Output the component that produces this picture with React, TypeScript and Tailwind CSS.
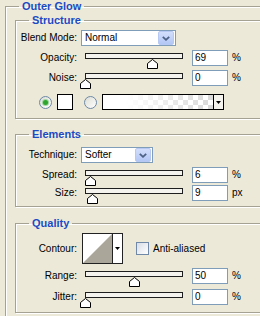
import React from "react";

const Label = ({ children }: { children: React.ReactNode }) => (
  <div className="w-[61px] shrink-0 text-right whitespace-nowrap">{children}</div>
);

const Slider = ({ pct }: { pct: number }) => (
  <div className="relative w-[106px] h-[16px] shrink-0">
    <div className="mt-[5px] mx-[4px] h-[6px] border border-[#1e1e1e] bg-[#f4f3ee]" />
    <svg
      className="absolute top-[6px]"
      style={{ left: 4 + pct * 98 - 5.5 }}
      width="11"
      height="10"
      viewBox="0 0 11 10"
    >
      <polygon points="5.5,0.5 10.5,4.5 10.5,9.5 0.5,9.5 0.5,4.5" fill="#fff" stroke="#000" strokeWidth="1" />
    </svg>
  </div>
);

const NumBox = ({ v }: { v: string }) => (
  <div className="ml-[5px] w-[36px] h-[16px] shrink-0 border border-[#7f9db9] bg-white pl-[2px] leading-[14px]">
    {v}
  </div>
);

const SliderRow = ({ label, pct, v, unit, className }: { label: string; pct: number; v: string; unit: string; className: string }) => (
  <div className={"flex items-center h-[16px] " + className}>
    <Label>{label}</Label>
    <div className="ml-[4px]">
      <Slider pct={pct} />
    </div>
    <NumBox v={v} />
    <span className="ml-[4px]">{unit}</span>
  </div>
);

const Chevron = () => (
  <div className="w-[16px] h-[14px] mr-[1px] rounded-[2px] border border-[#b7c8f2] bg-gradient-to-b from-[#d3defb] to-[#b3c7f5] flex items-center justify-center">
    <svg width="8" height="5" viewBox="0 0 8 5">
      <path d="M0.8 0.8 L4 3.8 L7.2 0.8" fill="none" stroke="#4d6185" strokeWidth="1.8" />
    </svg>
  </div>
);

const Select = ({ value, w }: { value: string; w: string }) => (
  <div className={"ml-[4px] h-[16px] border border-[#7f9db9] bg-white flex items-center justify-between " + w}>
    <span className="pl-[3px] leading-[14px]">{value}</span>
    <Chevron />
  </div>
);

const Radio = ({ checked }: { checked?: boolean }) => (
  <div className="w-[13px] h-[13px] shrink-0 rounded-full border border-[#6d89a6] bg-gradient-to-br from-[#dcdcd6] to-white flex items-center justify-center">
    {checked && <div className="w-[5px] h-[5px] rounded-full bg-[#2ea62e] shadow-[0_0_0_1px_#9ed69e]" />}
  </div>
);

const Legend = ({ children, ml }: { children: React.ReactNode; ml: string }) => (
  <legend className={"px-[3px] font-bold text-[11px] leading-[13px] text-[#1c4ac4] " + ml}>{children}</legend>
);

const group = "border border-[#a5a294] shadow-[inset_1px_1px_0_#fff,1px_1px_0_#fff]";

export default function App() {
  return (
    <div className="w-[260px] h-[316px] overflow-hidden bg-[#ece9d8] text-black text-[10px] leading-[12px] font-['Liberation_Sans',Arial,sans-serif]">
      <fieldset className={"ml-[5px] w-[300px] pl-[9px] pb-[10px] " + group}>
        <Legend ml="ml-[4px]">Outer Glow</Legend>

        {/* Structure */}
        <fieldset className={"mt-[1px] pb-[8px] " + group}>
          <Legend ml="ml-[13px]">Structure</Legend>
          <div className="mt-[3px] flex items-center h-[16px]">
            <Label>Blend Mode:</Label>
            <Select value="Normal" w="w-[95px]" />
          </div>
          <SliderRow className="mt-[4px]" label="Opacity:" pct={0.69} v="69" unit="%" />
          <SliderRow className="mt-[4px]" label="Noise:" pct={0} v="0" unit="%" />
          <div className="mt-[8px] flex items-center h-[16px] pl-[23px]">
            <Radio checked />
            <div className="ml-[5px] w-[16px] h-[16px] border border-black bg-white" />
            <div className="ml-[11px]">
              <Radio />
            </div>
            <div className="ml-[5px] w-[122px] h-[16px] border border-black flex">
              <div className="flex-1 bg-[conic-gradient(#d9d9d9_25%,#fff_0_50%,#d9d9d9_0_75%,#fff_0)] bg-[length:10px_10px]">
                <div className="w-full h-full bg-gradient-to-r from-white from-20% to-transparent" />
              </div>
              <div className="w-[10px] border-l border-black bg-[#f4f3ee] flex items-center justify-center">
                <svg width="5" height="3" viewBox="0 0 5 3">
                  <polygon points="0,0 5,0 2.5,3" fill="#000" />
                </svg>
              </div>
            </div>
          </div>
        </fieldset>

        {/* Elements */}
        <fieldset className={"mt-[9px] pb-[5px] " + group}>
          <Legend ml="ml-[13px]">Elements</Legend>
          <div className="mt-[6px] flex items-center h-[16px]">
            <Label>Technique:</Label>
            <Select value="Softer" w="w-[72px]" />
          </div>
          <SliderRow className="mt-[4px]" label="Spread:" pct={0.06} v="6" unit="%" />
          <SliderRow className="mt-[2px]" label="Size:" pct={0.075} v="9" unit="px" />
        </fieldset>

        {/* Quality */}
        <fieldset className={"mt-[10px] pb-[7px] " + group}>
          <Legend ml="ml-[13px]">Quality</Legend>
          <div className="mt-[3px] flex items-center h-[31px]">
            <Label>Contour:</Label>
            <div className="ml-[5px] w-[41px] h-[31px] border border-[#222] flex bg-white">
              <svg width="29" height="29" viewBox="0 0 29 29" className="shrink-0">
                <rect x="0" y="0" width="29" height="29" fill="#fff" />
                <polygon points="0,29 29,0 29,29" fill="#aaa69a" />
              </svg>
              <div className="flex-1 border-l border-[#222] bg-white flex items-center justify-center">
                <svg width="5" height="3" viewBox="0 0 5 3">
                  <polygon points="0,0 5,0 2.5,3" fill="#000" />
                </svg>
              </div>
            </div>
            <div className="ml-[13px] w-[13px] h-[13px] border border-[#7089a8] bg-gradient-to-br from-[#d8dde6] to-white" />
            <span className="ml-[4px]">Anti-aliased</span>
          </div>
          <SliderRow className="mt-[4px]" label="Range:" pct={0.5} v="50" unit="%" />
          <SliderRow className="mt-[5px]" label="Jitter:" pct={0} v="0" unit="%" />
        </fieldset>
      </fieldset>
    </div>
  );
}
